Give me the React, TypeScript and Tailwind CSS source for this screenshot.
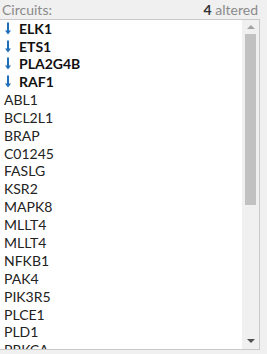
import React from 'react';

const altered = ['ELK1', 'ETS1', 'PLA2G4B', 'RAF1'];
const others = [
  'ABL1', 'BCL2L1', 'BRAP', 'C01245', 'FASLG', 'KSR2', 'MAPK8', 'MLLT4',
  'MLLT4', 'NFKB1', 'PAK4', 'PIK3R5', 'PLCE1', 'PLD1', 'PRKCA', 'PRKCB',
];

const DownArrow = () => (
  <svg width="6" height="13" viewBox="0 0 6 13" className="shrink-0">
    <path d="M3 0.5 V10" stroke="#1f6fb8" strokeWidth="2" fill="none" />
    <path d="M0 8.5 L3 12.5 L6 8.5 Z" fill="#1f6fb8" />
  </svg>
);

export default function App() {
  return (
    <div className="w-[267px] h-[354px] bg-[#f0f0f0] overflow-hidden font-['Lato',sans-serif] text-[14px]">
      {/* Header */}
      <div className="flex justify-between items-center h-[19px] pl-[2px] pr-[9px] text-[#8a8a8a]">
        <span>Circuits:</span>
        <span>
          <b className="text-[#333]">4</b> altered
        </span>
      </div>

      {/* List box */}
      <div className="flex w-[260px] h-[331px] bg-white border border-[#c8c8c8] border-l-0">
        <div className="flex-1 overflow-hidden">
          {altered.map((g) => (
            <div key={g} className="flex items-center h-[17.6px] pl-[5px] gap-[8px] font-bold text-[#111]">
              <DownArrow />
              <span>{g}</span>
            </div>
          ))}
          {others.map((g, i) => (
            <div key={i} className="flex items-center h-[17.9px] pl-[4px] text-[#222]">
              {g}
            </div>
          ))}
        </div>

        {/* Scrollbar */}
        <div className="w-[17px] flex flex-col items-center bg-[#f0f0f0]">
          <div className="h-[14px] flex items-center justify-center">
            <svg width="8" height="4" viewBox="0 0 8 4">
              <path d="M0 4 L4 0 L8 4 Z" fill="#a3a3a3" />
            </svg>
          </div>
          <div className="w-[11px] h-[171px] bg-[#c1c1c1]" />
          <div className="flex-1" />
          <div className="h-[17px] flex items-center justify-center">
            <svg width="8" height="4" viewBox="0 0 8 4">
              <path d="M0 0 L4 4 L8 0 Z" fill="#505050" />
            </svg>
          </div>
        </div>
      </div>
    </div>
  );
}
